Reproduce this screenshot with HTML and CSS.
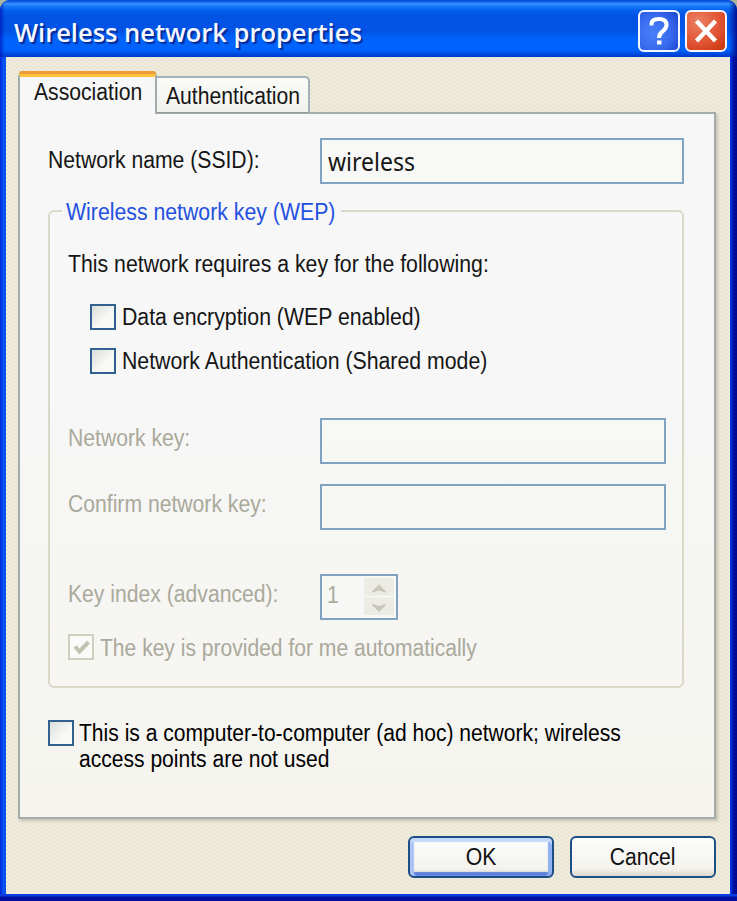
FILE: index.html
```html
<!DOCTYPE html>
<html lang="en">
<head>
<meta charset="utf-8">
<title>Wireless network properties</title>
<link rel="stylesheet" href="styles.css">
</head>
<body>
<div class="window">
  <header class="titlebar">
    <h1 class="title">Wireless network properties</h1>
    <button class="cap help" aria-label="Help"><svg viewBox="0 0 42 42"><path d="M13.500 15.500V14Q13.500 9 21 9Q28.500 9 28.500 15Q28.500 18.500 24.500 21.500Q21 24 21 28" fill="none" stroke="#fff" stroke-width="4"/><path d="M19 30.500h4.500v4H19z" fill="#fff"/></svg></button>
    <button class="cap close" aria-label="Close"><svg viewBox="0 0 42 42"><path d="M11.500 11L30.500 31M30.500 11L11.500 31" fill="none" stroke="#fff" stroke-width="4.500"/></svg></button>
  </header>
  <main class="client">
    <nav class="tabs">
      <div class="tab active"><span class="t">Association</span></div>
      <div class="tab"><span class="t">Authentication</span></div>
    </nav>
    <section class="pane">
      <div class="row ssid"><label class="label"><span class="t">Network name (SSID):</span></label><div class="field wide"><span class="value">wireless</span></div></div>
      <div class="group">
        <div class="legend"><span class="t">Wireless network key (WEP)</span></div>
        <p class="intro"><span class="t">This network requires a key for the following:</span></p>
        <div class="check indent"><i class="box"></i><span class="t">Data encryption (WEP enabled)</span></div>
        <div class="check indent second"><i class="box"></i><span class="t">Network Authentication (Shared mode)</span></div>
        <div class="row key off"><label class="label"><span class="t">Network key:</span></label><div class="field"></div></div>
        <div class="row confirm off"><label class="label"><span class="t">Confirm network key:</span></label><div class="field"></div></div>
        <div class="row index off"><label class="label"><span class="t">Key index (advanced):</span></label>
          <div class="field spin"><span class="t">1</span><svg class="spinner" viewBox="0 0 30 37"><path d="M0 0h30v17.500H0zM0 19.500h30V37H0z" fill="#ecece4"/><path d="M8.500 14L15 7.500L21.500 14L15 11.500zM8.500 26.500L15 33L21.500 26.500L15 29z" fill="#c6c6bb" stroke="#c6c6bb" stroke-width="1.500"/></svg></div></div>
        <div class="check auto off"><i class="box"><svg viewBox="0 0 26 26"><path d="M7 12.500L11.500 17.500L20.500 8" fill="none" stroke="#c3c3b3" stroke-width="4"/></svg></i><span class="t">The key is provided for me automatically</span></div>
      </div>
      <div class="check adhoc"><i class="box"></i><span class="t">This is a computer-to-computer (ad hoc) network; wireless<br>access points are not used</span></div>
    </section>
    <footer class="actions">
      <button class="btn default"><span class="t">OK</span></button>
      <button class="btn"><span class="t">Cancel</span></button>
    </footer>
  </main>
</div>
</body>
</html>
```
FILE: styles.css
```css
* { box-sizing: border-box; }
html { background: #a9b49c; }
body { margin: 0; width: 737px; height: 901px; overflow: hidden; }
.window {
  width: 737px; height: 901px;
  border-radius: 10px 10px 0 0;
  overflow: hidden;
  display: flex; flex-direction: column;
  padding: 0 7px 7px 6px;
  background:
    linear-gradient(#0a3ee0 0 2px, #0010a0 3px) bottom / 100% 7px no-repeat,
    linear-gradient(90deg, #0024dc, #0a5cf5 4px, #0848e0 6px, #0848e0 729px, #0030e0 731px, #0014a8 733px, #00088c);
  font-family: "Liberation Sans", Arial, sans-serif;
  font-size: 23.5px;
  color: #151515;
}
.titlebar {
  height: 57px; flex: none;
  margin: 0 -7px 0 -6px;
  padding: 10px 10px 0 14px;
  display: flex;
  background:
    linear-gradient(90deg, rgba(0,20,190,.7), transparent 5px, transparent 729px, rgba(0,10,140,.9)),
    linear-gradient(#0646d8 0, #1464ee 2px, #3c93ff 4px, #167bf8 6px, #0562ee 10px, #0053e4 16px, #0053e4 31px, #0062fa 38px, #0064fc 50px, #004ae0 54px, #0038c8 57px);
}
.title {
  margin: 0; flex: 1;
  font: 600 26px/44px "Open Sans", "Noto Sans", sans-serif;
  color: #f6f8ff; white-space: nowrap;
  text-shadow: 2px 2px 1px #062a96;
  transform: scaleX(.98); transform-origin: left;
}
.cap {
  width: 42px; height: 42px; flex: none;
  border: 2px solid #f4f7ff; border-radius: 6px;
  padding: 0; margin-left: 5px;
}
.cap svg { display: block; width: 42px; height: 42px; margin: -2px; }
.help { background: radial-gradient(circle at 35% 55%, #4a80f8, #3769ee 55%, #1844cc); }
.close { background: radial-gradient(circle at 30% 25%, #ec8062, #df5030 60%, #c83408); }
.client {
  flex: 1;
  padding: 14px 15px 0 12px;
  background-color: #f0eeda;
  background-image:
    radial-gradient(circle at 1px 1px, rgba(215,205,210,.5) 0 .5px, transparent 1px),
    radial-gradient(circle at 3px 3px, rgba(215,205,210,.5) 0 .5px, transparent 1px);
  background-size: 4px 4px;
}
.t { display: inline-block; white-space: nowrap; transform: scaleX(.9); transform-origin: left; }
.tabs { display: flex; align-items: flex-end; height: 42px; margin-bottom: -1px; }
.tab {
  width: 153px; height: 37px;
  border: 2px solid #a3b1b9; border-left: 0; border-bottom: 1px solid #919b9c;
  border-radius: 0 5px 0 0;
  background: linear-gradient(#fbfbf9, #f1f1ec);
  line-height: 37px; padding-left: 9px;
}
.tab.active {
  width: 139px; height: 43px;
  align-self: flex-start;
  border: 2px solid #a3abab; border-top: 6px solid #ffc23c; border-bottom: 0;
  border-radius: 6px 5px 0 0;
  background: #f7f7f7;
  line-height: 31px; padding-left: 14px;
  position: relative;
}
.tab.active::before {
  content: ""; position: absolute; left: -1px; right: -1px; top: -6px; height: 3px;
  background: #eb9c38; border-radius: 3px 3px 0 0;
}
.pane {
  height: 707px; width: 698px;
  padding: 24px 29px 0 28px;
  border: 2px solid #a3abab;
  background: linear-gradient(#f7f7f7 0, #f7f7f7 40%, #f5f4ee);
  box-shadow: 2px 2px 3px #c9c2b0;
}
.row { display: flex; }
.label { width: 251px; flex: none; line-height: 41px; }
.field {
  width: 346px; height: 46px;
  border: 2px solid #7fa3c1;
  background: rgba(248,248,246,.6);
}
.wide { width: 364px; }
.ssid .label { width: 272px; line-height: 44px; }
.value {
  display: inline-block;
  font: 25px/43px "Noto Sans", sans-serif;
  margin-left: 6px;
  transform: scaleX(.92); transform-origin: left;
}
.group {
  margin-top: 26px; height: 478px; width: 636px;
  border: 2px solid #dad9c8; border-radius: 6px;
  padding-left: 18px;
}
.legend {
  width: 279px; height: 28px; line-height: 28px;
  margin: -14px 0 0 -6px; padding-left: 4px;
  background: #f7f7f7; color: #2450e0;
}
.intro { margin: 24px 0 0; line-height: 28px; }
.check { display: flex; line-height: 27px; height: 26px; }
.box {
  width: 26px; height: 26px; flex: none;
  margin-right: 6px;
  border: 2px solid #31618f;
  background: linear-gradient(135deg, #dcdcd8, #f8f8f7 60%);
}
.indent { margin: 26px 0 0 22px; }
.indent .t, .legend .t, .intro .t { transform: scaleX(.905); }
.second { margin-top: 18px; }
.key { margin-top: 44px; }
.confirm { margin-top: 20px; }
.index { margin-top: 44px; }
.row .label { margin-right: 1px; }
.ssid .label { margin-right: 0; }
.off { color: #aaa99b; }
.off .box { border-color: #cfcfbf; background: #fafaf8; }
.box svg { display: block; width: 26px; height: 26px; margin: -2px; }
.spin { width: 78px; display: flex; justify-content: space-between; padding: 2px 2px 0 5px; line-height: 34px; }
.spinner { width: 30px; height: 37px; }
.auto { margin-top: 14px; line-height: 28px; }
.auto .t, .adhoc .t { transform: scaleX(.896); }
.adhoc { margin-top: 32px; line-height: 26px; color: #000; }
.adhoc .box { margin-right: 5px; }
.adhoc .t { height: 52px; }
.actions { display: flex; gap: 16px; justify-content: flex-end; padding-top: 17px; margin-right: -1px; }
.btn {
  width: 146px; height: 42px; padding: 0;
  border: 2px solid #1d4f86; border-radius: 6px;
  background: linear-gradient(#fcfcfb, #f4f3ee 80%, #dcd8cc);
  font: inherit; color: #111;
}
.btn .t { transform-origin: center; }
.default { box-shadow: inset 0 4px 1px #c5d9fb, inset 4px 0 1px #a9c3f3, inset -4px 0 1px #8eaff0, inset 0 -4px 1px #5c82dc; }
```
